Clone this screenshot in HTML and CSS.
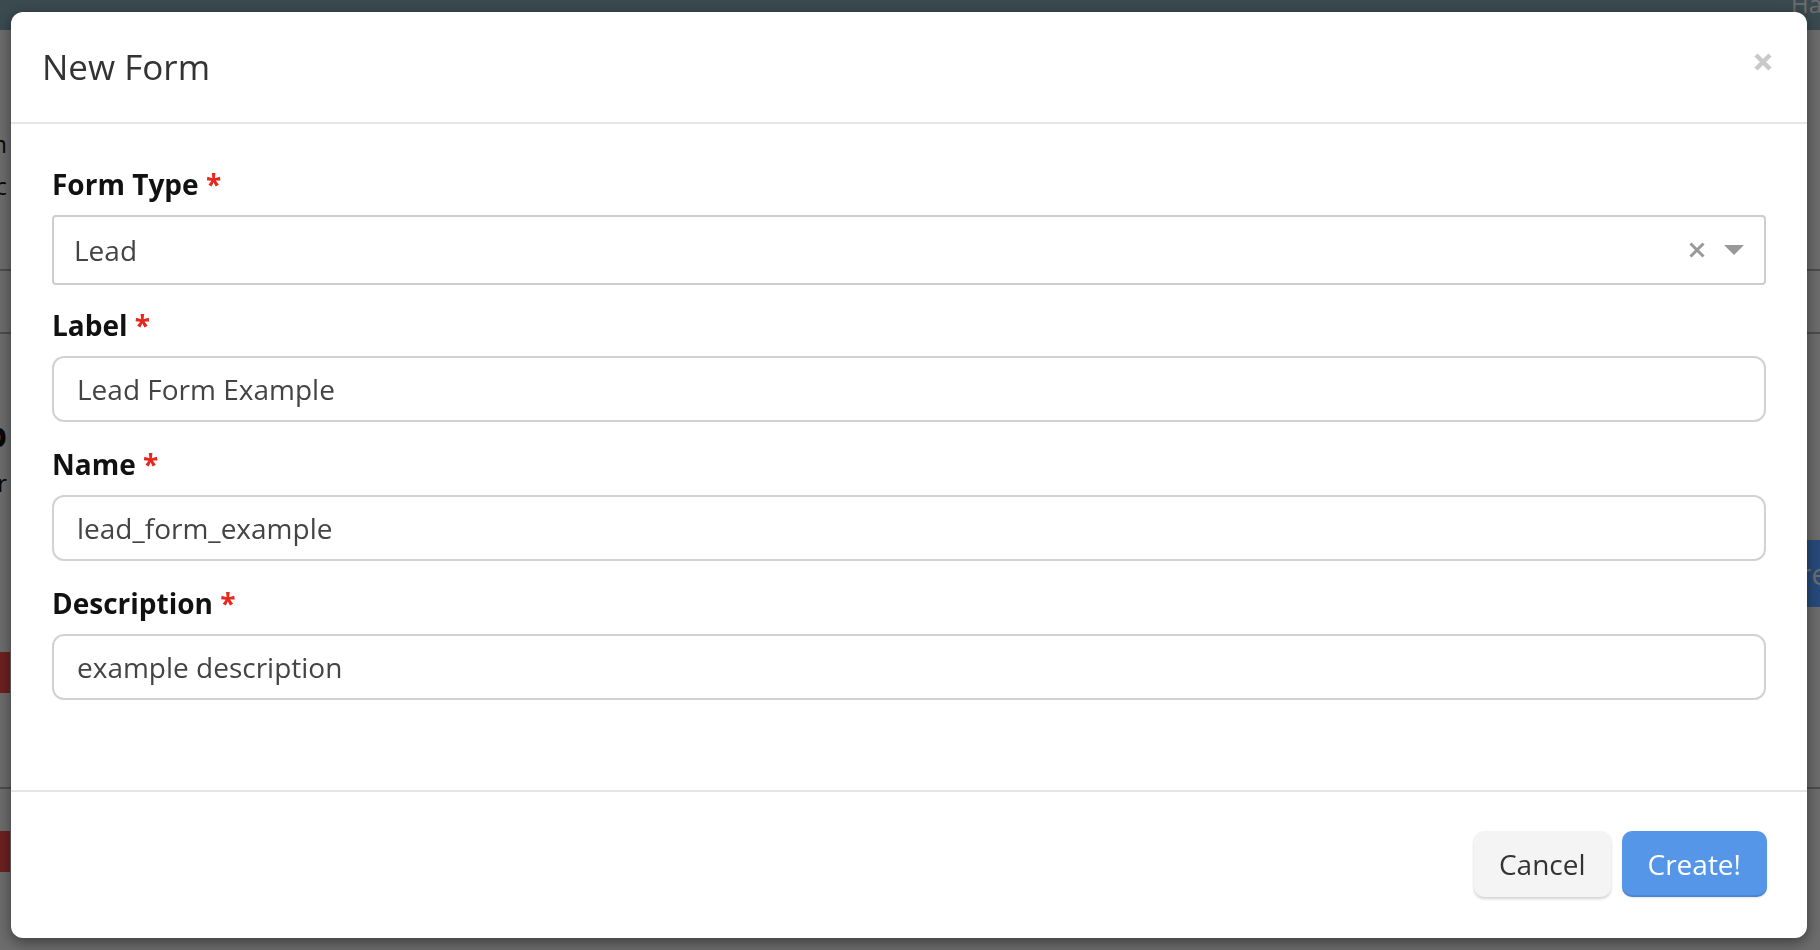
FILE: index.html
```html
<!DOCTYPE html>
<html>
<head>
  <title>New Form</title>
  <link rel="stylesheet" href="styles.css">
</head>
<body>
  <div class="page">
    <header class="topbar">
      <span class="brand-link">Happy Forms</span>
    </header>
    <div class="page-body">
      <div class="row row-intro">
        <div class="cell">Custom platform</div>
        <div class="cell">Records sync</div>
      </div>
      <div class="row row-tabs"></div>
      <div class="row row-toolbar"></div>
      <div class="row row-list">
        <div class="cell cell-bold">Group</div>
        <div class="cell">Owner</div>
        <div class="side-btn">Create</div>
      </div>
      <div class="row row-item">
        <div class="trash-btn"></div>
      </div>
      <div class="row row-last">
        <div class="trash-btn"></div>
      </div>
    </div>
  </div>

  <div class="backdrop"></div>

  <div class="modal">
    <div class="modal-header">
      <h4 class="modal-title">New Form</h4>
      <svg class="close-icon" width="20" height="20" viewBox="0 0 20 20">
        <path d="M3 3 L17 17 M17 3 L3 17" stroke="#c9c9c9" stroke-width="4.5" stroke-linecap="butt"/>
      </svg>
    </div>
    <div class="modal-body">
      <div class="form-group group-first">
        <label class="form-label">Form Type <span class="req">*</span></label>
        <div class="select-box">
          <span class="select-value">Lead</span>
          <span class="select-icons">
            <svg width="16" height="16" viewBox="0 0 16 16">
              <path d="M1.5 1.5 L14.5 14.5 M14.5 1.5 L1.5 14.5" stroke="#999" stroke-width="3"/>
            </svg>
            <svg width="20" height="10" viewBox="0 0 20 10">
              <path d="M0 0 L20 0 L10 10 Z" fill="#999"/>
            </svg>
          </span>
        </div>
      </div>
      <div class="form-group">
        <label class="form-label">Label <span class="req">*</span></label>
        <input class="field" type="text" value="Lead Form Example">
      </div>
      <div class="form-group">
        <label class="form-label">Name <span class="req">*</span></label>
        <input class="field" type="text" value="lead_form_example">
      </div>
      <div class="form-group">
        <label class="form-label">Description <span class="req">*</span></label>
        <input class="field" type="text" value="example description">
      </div>
    </div>
    <div class="modal-footer">
      <button type="button" class="btn btn-cancel">Cancel</button>
      <button type="button" class="btn btn-create">Create!</button>
    </div>
  </div>
</body>
</html>
```

FILE: styles.css
```css
html, body {
  margin: 0;
  height: 100%;
  overflow: hidden;
}
body {
  font-family: "Open Sans", "Noto Sans", sans-serif;
  background: #d8d8d8;
}

/* page behind the dialog */
.page {
  height: 100%;
}
.topbar {
  height: 30px;
  background: #74949f;
  display: flex;
  justify-content: flex-end;
  overflow: hidden;
}
.brand-link {
  font-size: 24px;
  line-height: 20px;
  color: #d8d8d8;
  margin-right: -120px;
  margin-top: -6px;
}
.page-body {
  margin-left: -220px;
  margin-right: -40px;
}
.row {
  display: flex;
  flex-direction: column;
  position: relative;
}
.cell {
  width: 227px;
  text-align: right;
  white-space: nowrap;
  font-size: 24px;
  line-height: 42px;
  color: #111;
}
.cell-bold {
  font-weight: bold;
  font-size: 34px;
  line-height: 56px;
}
.row-intro {
  height: 241px;
  padding-top: 93px;
  box-sizing: border-box;
  border-bottom: 2px solid #999;
}
.row-tabs {
  height: 61px;
  border-bottom: 2px solid #999;
}
.row-toolbar {
  height: 72px;
}
.row-list {
  height: 241px;
}
.side-btn {
  position: absolute;
  right: 0;
  top: 134px;
  width: 80px;
  height: 67px;
  background: #4e94f4;
  color: #d8d8d8;
  font-size: 30px;
  line-height: 67px;
  padding-left: 10px;
}
.row-item {
  height: 140px;
}
.trash-btn {
  margin-top: 5px;
  width: 230px;
  height: 41px;
  background: #d84040;
}
.row-last {
  border-top: 2px solid #999;
}
.row-last .trash-btn {
  margin-top: 42px;
}

.backdrop {
  position: fixed;
  inset: 0;
  background: rgba(0, 0, 0, 0.5);
}

/* dialog */
.modal {
  position: fixed;
  left: 11px;
  top: 12px;
  width: 1796px;
  height: 926px;
  background: #fff;
  border-radius: 12px;
  box-shadow: 0 4px 14px rgba(0, 0, 0, 0.45);
  display: flex;
  flex-direction: column;
}
.modal-header {
  display: flex;
  justify-content: space-between;
  align-items: flex-start;
  padding: 36px 34px 36px 31px;
  border-bottom: 2px solid #e5e5e5;
}
.modal-title {
  margin: 0;
  font-size: 35px;
  line-height: 38px;
  font-weight: normal;
  color: #333;
}
.close-icon {
  margin-top: 4px;
}
.modal-body {
  flex: 1;
  padding: 40px 41px 0 41px;
}
.form-group {
  margin-bottom: 22px;
}
.group-first {
  margin-bottom: 20px;
}
.form-label {
  display: block;
  font-size: 28px;
  line-height: 40px;
  font-weight: bold;
  color: #111;
  margin-bottom: 11px;
}
.req {
  color: #e8261c;
}
.select-box {
  height: 70px;
  box-sizing: border-box;
  border: 2px solid #cdcdcd;
  border-radius: 4px;
  display: flex;
  align-items: center;
  justify-content: space-between;
  padding: 0 20px 0 20px;
}
.select-value {
  font-size: 28px;
  color: #444;
}
.select-icons {
  display: flex;
  align-items: center;
  gap: 19px;
}
.field {
  display: block;
  width: 100%;
  height: 66px;
  box-sizing: border-box;
  border: 2px solid #d2d2d2;
  border-radius: 12px;
  padding: 0 23px;
  font-family: "Open Sans", "Noto Sans", sans-serif;
  font-size: 28px;
  color: #444;
  outline: none;
}
.modal-footer {
  display: flex;
  justify-content: flex-end;
  gap: 11px;
  padding: 39px 40px 41px;
  border-top: 2px solid #e5e5e5;
}
.btn {
  height: 66px;
  padding: 0 26px;
  border: none;
  border-radius: 10px;
  font-family: "Open Sans", "Noto Sans", sans-serif;
  font-size: 28px;
}
.btn-cancel {
  padding: 0 25px;
  background: #f4f4f4;
  color: #333;
  box-shadow: 0 2px 3px rgba(0, 0, 0, 0.18);
}
.btn-create {
  background: #5596e8;
  color: #fff;
  box-shadow: inset 0 -2px 0 rgba(0, 0, 0, 0.1), 0 1px 2px rgba(0, 0, 0, 0.1);
}
```
